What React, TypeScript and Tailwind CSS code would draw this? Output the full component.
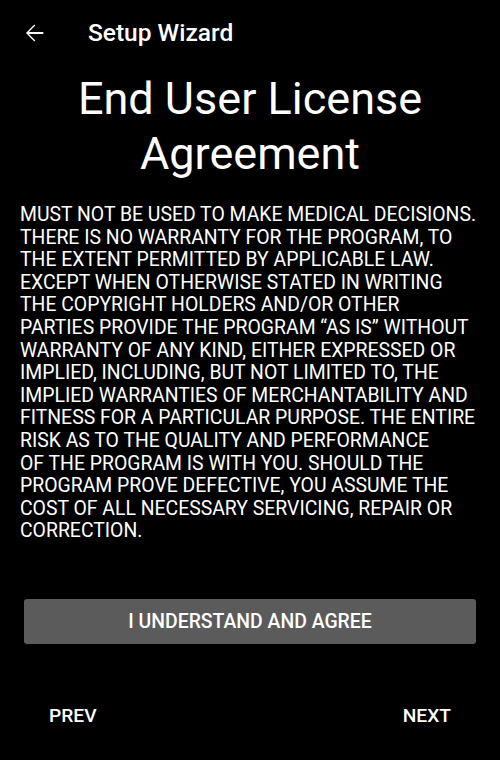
import React from "react";

const lines = [
  "MUST NOT BE USED TO MAKE MEDICAL DECISIONS.",
  "THERE IS NO WARRANTY FOR THE PROGRAM, TO",
  "THE EXTENT PERMITTED BY APPLICABLE LAW.",
  "EXCEPT WHEN OTHERWISE STATED IN WRITING",
  "THE COPYRIGHT HOLDERS AND/OR OTHER",
  "PARTIES PROVIDE THE PROGRAM \u201CAS IS\u201D WITHOUT",
  "WARRANTY OF ANY KIND, EITHER EXPRESSED OR",
  "IMPLIED, INCLUDING, BUT NOT LIMITED TO, THE",
  "IMPLIED WARRANTIES OF MERCHANTABILITY AND",
  "FITNESS FOR A PARTICULAR PURPOSE. THE ENTIRE",
  "RISK AS TO THE QUALITY AND PERFORMANCE",
  "OF THE PROGRAM IS WITH YOU. SHOULD THE",
  "PROGRAM PROVE DEFECTIVE, YOU ASSUME THE",
  "COST OF ALL NECESSARY SERVICING, REPAIR OR",
  "CORRECTION.",
];

export default function App() {
  return (
    <div className="w-[500px] h-[760px] bg-black text-white flex flex-col font-['Roboto',sans-serif] overflow-hidden">
      <div className="flex items-center h-[66px] pl-[20px]">
        <svg width="28" height="28" viewBox="0 0 24 24" fill="white">
          <path d="M20 11.1H7.6l5.5-5.5L12.3 4.8 5.1 12l7.2 7.2.8-.8-5.5-5.5H20z" />
        </svg>
        <span className="ml-[40px] text-[24.5px] font-medium leading-none">Setup Wizard</span>
      </div>
      <h1 className="mt-[5px] text-center text-[45px] leading-[55px] font-normal">
        End User License
        <br />
        Agreement
      </h1>
      <div className="mt-[23px] px-[20px] text-[19.4px] leading-[22.6px] whitespace-nowrap">
        {lines.map((l, i) => (
          <div key={i}>{l}</div>
        ))}
      </div>
      <div className="mt-[56px] mx-[24px] h-[45px] rounded-[3px] bg-[#5b5b5b] flex items-center justify-center text-[19.4px] font-medium">
        I UNDERSTAND AND AGREE
      </div>
      <div className="mt-[58px] flex justify-between px-[49px] text-[19.2px] font-medium">
        <span>PREV</span>
        <span>NEXT</span>
      </div>
    </div>
  );
}
